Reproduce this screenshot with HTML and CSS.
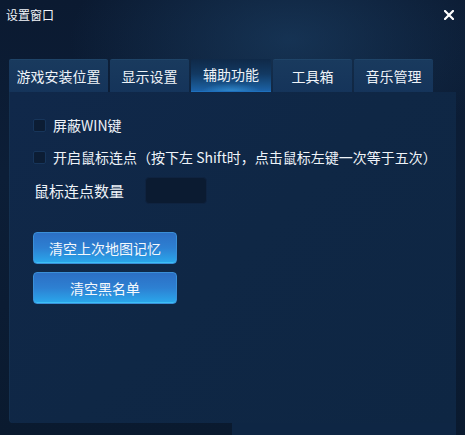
FILE: index.html
```html
<!DOCTYPE html>
<html lang="zh-CN">
<head>
<meta charset="utf-8">
<title>设置窗口</title>
<link rel="stylesheet" href="styles.css">
</head>
<body>
<div class="window">
  <div class="titlebar">
    <span class="title">设置窗口</span>
    <span class="close" aria-label="关闭">
      <svg width="10" height="10" viewBox="0 0 10 10"><path d="M1 1L9 9M9 1L1 9" stroke="#ffffff" stroke-width="2.2" stroke-linecap="square"/></svg>
    </span>
  </div>
  <div class="tabs">
    <div class="tab tab-wide">游戏安装位置</div>
    <div class="tab">显示设置</div>
    <div class="tab active">辅助功能</div>
    <div class="tab">工具箱</div>
    <div class="tab">音乐管理</div>
  </div>
  <div class="panel">
    <label class="check-row"><span class="checkbox"></span><span>屏蔽WIN键</span></label>
    <label class="check-row"><span class="checkbox"></span><span>开启鼠标连点（按下左 Shift时，点击鼠标左键一次等于五次）</span></label>
    <div class="field-row"><span class="field-label">鼠标连点数量</span><span class="input"></span></div>
    <div class="buttons">
      <button class="btn">清空上次地图记忆</button>
      <button class="btn">清空黑名单</button>
    </div>
  </div>
  <div class="panel-tail"></div>
</div>
</body>
</html>
```

FILE: styles.css
```css
* { box-sizing: border-box; }
html, body { margin: 0; padding: 0; }
body {
  width: 465px;
  height: 435px;
  overflow: hidden;
  font-family: "Noto Sans CJK SC", "Noto Sans", sans-serif;
  color: #eef3f8;
}
.window {
  width: 465px;
  height: 435px;
  display: flex;
  flex-direction: column;
  background:
    radial-gradient(ellipse 220px 120px at 290px 40px, rgba(30,70,110,0.55), rgba(30,70,110,0) 100%),
    linear-gradient(180deg, #0b1a31 0%, #0c1e37 40%, #0a1a2f 100%);
}
.titlebar {
  height: 30px;
  display: flex;
  align-items: center;
  justify-content: space-between;
  padding: 0 11px 0 6px;
}
.title {
  font-size: 12px;
  line-height: 14px;
  color: #f2f5f9;
}
.close { display: flex; width: 10px; height: 10px; }
.tabs {
  margin-top: 29px;
  padding-left: 9px;
  display: flex;
  gap: 2px;
  height: 33px;
}
.tab {
  width: 79px;
  height: 33px;
  display: flex;
  align-items: center;
  justify-content: center;
  font-size: 14px;
  color: #eef3f8;
  background: linear-gradient(180deg, #193a5e 0%, #15345a 100%);
  border-top: 1px solid #1f4468;
  border-radius: 2px 2px 0 0;
  padding-bottom: 1px;
}
.tab-wide { width: 99px; }
.tab.active {
  width: 80px;
  border-top: none;
  padding-top: 0;
  padding-bottom: 4px;
  background:
    radial-gradient(ellipse 30px 9px at 50% 100%, rgba(70,180,245,0.5), rgba(70,180,245,0) 100%),
    linear-gradient(180deg, #0f2948 0%, #123962 45%, #18558f 80%, #1c64ad 100%);
  box-shadow: inset 0 -1px 0 #1f70bd;
}
.panel {
  margin-left: 9px;
  width: 447px;
  height: 331px;
  background: linear-gradient(135deg, #10284a 0%, #0f2745 50%, #0e2643 100%);
  border-left: 1px solid #14304f;
  border-radius: 0 0 0 4px;
  padding: 21px 0 0 23px;
  display: flex;
  flex-direction: column;
  gap: 8px;
}
.panel-tail {
  margin-left: 232px;
  width: 224px;
  height: 12px;
  background: #0e2644;
}
.check-row {
  display: flex;
  align-items: center;
  height: 24px;
  gap: 7px;
  font-size: 14px;
  color: #eef3f8;
}
.checkbox {
  width: 13px;
  height: 13px;
  background: #0c1d34;
  border: 1px solid #17355a;
  border-radius: 2px;
  flex: none;
}
.field-row {
  display: flex;
  align-items: center;
  height: 27px;
  padding-left: 1px;
  gap: 21px;
}
.field-label {
  font-size: 15px;
  color: #eef3f8;
}
.input {
  width: 62px;
  height: 27px;
  background: #0b1b31;
  border: 1px solid #0f2340;
  border-radius: 4px;
}
.buttons {
  margin-top: 20px;
  display: flex;
  flex-direction: column;
  gap: 8px;
}
.btn {
  width: 144px;
  height: 32px;
  padding: 0;
  font-family: "Noto Sans CJK SC", "Noto Sans", sans-serif;
  font-size: 14px;
  color: #f4f8fc;
  border: 1px solid #3a8fd8;
  border-radius: 4px;
  background: linear-gradient(180deg, #2c6fc4 0%, #2d80d2 50%, #2aa8ec 100%);
  box-shadow: inset 0 -1px 0 #3cc0f5;
}
```
